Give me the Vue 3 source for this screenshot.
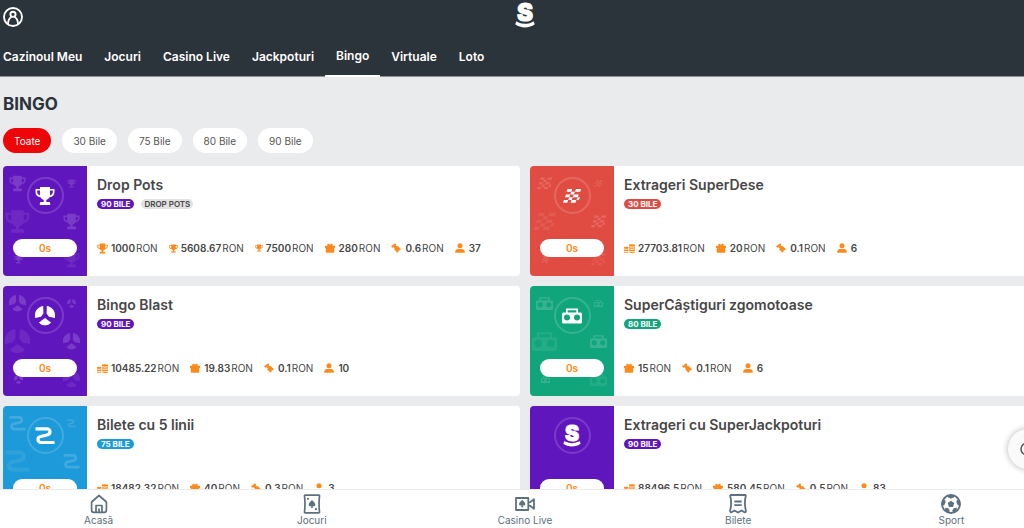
<script setup>
const menu = ['Cazinoul Meu', 'Jocuri', 'Casino Live', 'Jackpoturi', 'Bingo', 'Virtuale', 'Loto']
const filters = ['Toate', '30 Bile', '75 Bile', '80 Bile', '90 Bile']

const cup = (size, value) => ({ icon: 'trophy', size, value, unit: 'RON' })
const coins = (value) => ({ icon: 'coins', size: 'l', value, unit: 'RON' })
const gift = (value) => ({ icon: 'gift', size: 'g', value, unit: 'RON' })
const ticket = (value) => ({ icon: 'ticket', size: 'g', value, unit: 'RON' })
const players = (value) => ({ icon: 'user', size: 'g', value })

const games = [
  {
    name: 'Drop Pots', tone: 'purple', art: 'trophy', deco: true, balls: '90 BILE', tag: 'DROP POTS',
    stats: [cup('l', '1000'), cup('m', '5608.67'), cup('s', '7500'), gift('280'), ticket('0.6'), players('37')],
  },
  {
    name: 'Extrageri SuperDese', tone: 'red', art: 'flag', deco: true, balls: '30 BILE',
    stats: [coins('27703.81'), gift('20'), ticket('0.1'), players('6')],
  },
  {
    name: 'Bingo Blast', tone: 'purple', art: 'blast', deco: true, balls: '90 BILE',
    stats: [coins('10485.22'), gift('19.83'), ticket('0.1'), players('10')],
  },
  {
    name: 'SuperCâștiguri zgomotoase', tone: 'green', art: 'radio', deco: true, balls: '80 BILE',
    stats: [gift('15'), ticket('0.1'), players('6')],
  },
  {
    name: 'Bilete cu 5 linii', tone: 'blue', art: 'snake', deco: true, balls: '75 BILE',
    stats: [coins('18482.32'), gift('40'), ticket('0.3'), players('3')],
  },
  {
    name: 'Extrageri cu SuperJackpoturi', tone: 'purple', art: 'brand', deco: false, balls: '90 BILE',
    stats: [coins('88496.5'), gift('580.45'), ticket('0.5'), players('83')],
  },
]

const deco = [
  { x: 6, y: 9, s: 17, o: 0.16 },
  { x: 64, y: 13, s: 9, o: 0.14 },
  { x: 2, y: 43, s: 25, o: 0.08 },
  { x: 60, y: 47, s: 17, o: 0.16 },
  { x: 11, y: 89, s: 9, o: 0.16 },
  { x: 60, y: 85, s: 17, o: 0.08 },
]

const tabs = [
  { label: 'Acasă', icon: 'home' },
  { label: 'Jocuri', icon: 'card' },
  { label: 'Casino Live', icon: 'camera' },
  { label: 'Bilete', icon: 'receipt' },
  { label: 'Sport', icon: 'ball' },
]
</script>

<template>
  <svg class="sprite" aria-hidden="true">
    <symbol id="trophy" viewBox="0 0 20 20">
      <path d="M5 1h10v2h4.500v3c0 3-2 5-5 5.300-.800 1.400-2 2.200-3.200 2.500V16H14a1.200 1.200 0 0 1 1.200 1.200V19H4.800v-1.800A1.200 1.200 0 0 1 6 16h2.700v-2.200c-1.200-.300-2.400-1.100-3.200-2.500C2.500 11 .5 9 .5 6V3H5zM2.200 4.600V6c0 1.600.900 2.800 2.600 3.400C4.900 8 5 6.500 5 4.600zM15 4.600c0 1.900.1 3.400.2 4.800 1.700-.6 2.600-1.800 2.600-3.400V4.600z" />
    </symbol>
    <symbol id="flag" viewBox="0 0 20 20">
      <path d="M5.500 3h4.800l-1 2.700H4.500zM14 3h5.200l-1 2.700H13zM9.300 5.700H13l-1.200 2.800H8.200zM4 8.500h4.200l-1 2.700H3zM11.800 8.500h5l-1 2.700h-5zM7.200 11.200h3.600l-1.200 2.800H6.200zM15.800 11.200H18L17 14h-2.600zM2 14h4.200l-1 2.700H1zM9.600 14h4.800l-1 2.700H8.600z" />
    </symbol>
    <symbol id="blast" viewBox="0 0 20 20">
      <path d="M8.200 0 8.400 7.500 6 10.800 0 12C-1 6 2.500.8 8.200 0zM11.800 0l-.2 7.500 2.400 3.300 6 1.200C21 6 17.500.8 11.800 0zM10 12l6 4.500c-2.800 3.800-9.200 3.800-12 0z" />
    </symbol>
    <symbol id="radio" viewBox="0 0 20 20">
      <path fill-rule="evenodd" d="M4 2.500h12v4h2.500A1.500 1.500 0 0 1 20 8v8a1.500 1.500 0 0 1-1.500 1.500h-17A1.500 1.500 0 0 1 0 16V8a1.500 1.500 0 0 1 1.500-1.500H4zM5.700 4.200v2.300h8.600V4.200zM5 8.500a3 3 0 1 0 0 6 3 3 0 0 0 0-6zm10 0a3 3 0 1 0 0 6 3 3 0 0 0 0-6z" />
    </symbol>
    <symbol id="snake" viewBox="0 0 20 20">
      <path class="line" stroke-width="3.200" d="M.5 2.800H12a3 3 0 0 1 3 3c0 1.800-1 2.800-3 3.200L5.500 10.500C3.600 11 3 12 3 13.500a3 3 0 0 0 3 3h13.500" />
    </symbol>
    <symbol id="coins" viewBox="0 0 20 20">
      <path d="M9 3.500C9 2 20 2 20 3.500v2C20 7 9 7 9 5.500zM9 7.200c2 1.100 9 1.100 11 0v2.600c-2 1.100-9 1.100-11 0zM9 11.400c2 1.100 9 1.100 11 0V14c-2 1.100-9 1.100-11 0zM9 15.500c2 1.100 9 1.100 11 0v1.200c0 1.700-9 1.700-11 0zM0 8c1-1.400 7-1.400 8 0v2C6 11 2 11 0 10zM0 11.500c2 1 6 1 8 0V14c-2 1-6 1-8 0zM0 15.500c2 1 6 1 8 0v1.200c-1 1.400-7 1.400-8 0z" />
    </symbol>
    <symbol id="gift" viewBox="0 0 20 20">
      <path d="M10 5C9.500 2 8 .8 6 1.500 4.500 2 4 4 5 5.500H1.200A1.200 1.200 0 0 0 0 6.700V10h1.500v8A1.500 1.500 0 0 0 3 19.500h14a1.500 1.500 0 0 0 1.500-1.500v-8H20V6.700a1.200 1.200 0 0 0-1.200-1.200H15c1-1.500.5-3.500-1-4-2-.7-3.500.5-4 3.500z" />
    </symbol>
    <symbol id="ticket" viewBox="0 0 20 20">
      <path d="m8 .5 2.500 2.500a2 2 0 0 0 3 3L20 12.500l-2.500 2a2 2 0 0 0-2.500 2.500l-2 2.500L6.500 13A2.300 2.300 0 0 0 3 9.500L0 7z" />
    </symbol>
    <symbol id="user" viewBox="0 0 20 20">
      <circle cx="10" cy="5.500" r="5" />
      <path d="M.5 19.500V17c0-3 2.500-5 5.500-5h8c3 0 5.500 2 5.500 5v2.500z" />
    </symbol>
    <symbol id="home" viewBox="0 0 20 20">
      <path class="line" stroke-width="1.700" stroke-linejoin="round" d="M2.600 8 10 1.500 17.400 8v8.300a2 2 0 0 1-2 2H4.600a2 2 0 0 1-2-2zM7 18v-6.500h6V18M10 14.500V18" />
    </symbol>
    <symbol id="card" viewBox="0 0 20 20">
      <path class="line" stroke-width="1.700" stroke-linejoin="round" d="M3.200 1.200h13.600c.6 0 .8.400.7 1-.6 5-.6 10.600 0 15.600.1.600-.1 1-.7 1H3.200c-.6 0-.8-.4-.7-1 .6-5 .6-10.600 0-15.600-.1-.6.1-1 .7-1z" />
      <path d="M10 6c1 1.500 3.300 2.400 3.300 4.600 0 1.700-1.700 2.200-2.700 1.300l.6 1.900H8.800l.6-1.900c-1 .9-2.700.4-2.700-1.300C6.700 8.400 9 7.500 10 6z" />
      <circle cx="6" cy="4.800" r="1.100" /><circle cx="14" cy="15.200" r="1.100" />
    </symbol>
    <symbol id="camera" viewBox="0 0 20 20">
      <path class="line" stroke-width="1.800" stroke-linejoin="round" d="M1 4h12.300v12H1zM13.500 8.500l1.500-.3 4-3v9.600l-4-3-1.500-.3" />
      <path d="M7.200 5.800c1 1.400 3.100 2.200 3.100 4.200 0 1.600-1.600 2-2.500 1.200l.5 2H6.100l.5-2c-.9.800-2.500.4-2.500-1.200 0-2 2.100-2.800 3.100-4.200z" />
    </symbol>
    <symbol id="receipt" viewBox="0 0 20 20">
      <path class="line" stroke-width="1.800" stroke-linejoin="round" d="M3 1h14c.7 0 1 .4.800 1-1.200 4-1.200 9 0 14.500.2 1.300-.3 2.200-1.300 1.700L13.500 16.500 10 18.500l-3.500-2-3 1.700c-1 .5-1.500-.4-1.300-1.700 1.200-5.500 1.200-10.500 0-14.500C2 1.400 2.300 1 3 1zM6.300 7.500h7.400M6.300 11.200h7.400" />
    </symbol>
    <symbol id="ball" viewBox="0 0 20 20">
      <circle class="line" cx="10" cy="10" r="9" stroke-width="1.800" />
      <path d="m10 6.700 3.300 2.400-1.300 3.800H8L6.700 9.100zM6 1.200h8l-1 2.200-3 1-3-1zM.7 7.500 4 5.500l.6 2.800-1.400 3L.6 11.500zM19.300 7.500 16 5.500l-.6 2.800 1.400 3 2.600.2zM4 17l.3-3.200 3 .4 1.500 2.600L7.500 19zM16 17l-.3-3.200-3 .4-1.500 2.600 1.300 2.200zM2.500 5 4 2.800l.8 1.600zM17.500 5 16 2.800l-.8 1.600z" />
    </symbol>
  </svg>

  <div class="page">
    <header class="top">
      <div class="bar">
        <button class="account" aria-label="Contul meu">
          <svg viewBox="0 0 20 20" width="20" height="20">
            <g class="line" stroke-width="1.900">
              <circle cx="10" cy="10" r="9" />
              <circle cx="10" cy="7.300" r="2.600" />
              <path d="M5 17c0-3.500 1.300-5.800 3.600-7.200M15 17c0-3.500-1.300-5.800-3.600-7.200" />
            </g>
          </svg>
        </button>
        <a class="logo" href="#" aria-label="Superbet">
          <svg class="brand" viewBox="0 0 20 26" width="20" height="26">
            <text x="10" y="19" text-anchor="middle" class="mark">S</text>
            <path d="m1.500 19.300 1.500.9c4.500 2 9.500 2 14 0l1.500-.9 1.300 3c-5.500 4.200-14.100 4.200-19.600 0z" />
          </svg>
        </a>
      </div>
      <nav class="menu">
        <a v-for="m in menu" :key="m" href="#" :class="{ active: m === 'Bingo' }">{{ m }}</a>
      </nav>
    </header>

    <main class="content">
      <h1>BINGO</h1>
      <div class="filters">
        <button v-for="(f, i) in filters" :key="f" :class="{ on: i === 0 }">{{ f }}</button>
      </div>
      <section class="grid">
        <article v-for="g in games" :key="g.name" class="game" :class="g.tone">
          <div class="art">
            <svg v-if="g.deco" class="pattern" viewBox="0 0 84 110">
              <use v-for="(d, i) in deco" :key="i" :href="'#' + g.art" :x="d.x" :y="d.y" :width="d.s" :height="d.s" :opacity="d.o" />
            </svg>
            <div class="ring">
              <svg v-if="g.art === 'brand'" class="emblem brand" viewBox="0 0 20 26">
                <text x="10" y="19" text-anchor="middle" class="mark">S</text>
                <path d="m1.500 19.300 1.500.9c4.500 2 9.500 2 14 0l1.500-.9 1.300 3c-5.500 4.200-14.100 4.200-19.600 0z" />
              </svg>
              <svg v-else class="emblem"><use :href="'#' + g.art" /></svg>
            </div>
            <button class="timer">0s</button>
          </div>
          <div class="info">
            <h2>{{ g.name }}</h2>
            <div class="badges">
              <span class="balls">{{ g.balls }}</span>
              <span v-if="g.tag" class="tag">{{ g.tag }}</span>
            </div>
            <ul class="stats">
              <li v-for="(s, i) in g.stats" :key="i">
                <svg :class="['ico', s.size]"><use :href="'#' + s.icon" /></svg>
                <b>{{ s.value }}</b><span v-if="s.unit">{{ s.unit }}</span>
              </li>
            </ul>
          </div>
        </article>
      </section>
    </main>

    <nav class="tabs">
      <a v-for="t in tabs" :key="t.label" href="#">
        <svg width="20" height="20"><use :href="'#' + t.icon" /></svg>
        <span>{{ t.label }}</span>
      </a>
    </nav>
  </div>

  <button class="float" aria-label="Caută">
    <svg viewBox="0 0 16 16" width="16" height="16"><g class="line" stroke-width="1.500"><circle cx="7" cy="8" r="6" /><path d="m12 12 3 3" /></g></svg>
  </button>
</template>

<style>
html, body {
  overflow: hidden;
  background: #e9ebed;
}
</style>

<style scoped>
* {
  box-sizing: border-box;
}
.sprite {
  position: absolute;
  width: 0;
  height: 0;
}
.mark {
  font: 900 24px Inter, sans-serif;
  stroke: currentColor;
  stroke-width: 1;
}
svg {
  display: block;
  fill: currentColor;
}
.line {
  fill: none;
  stroke: currentColor;
}
.brand {
  overflow: visible;
}
button {
  border: 0;
  padding: 0;
  font: inherit;
  cursor: pointer;
}
a {
  color: inherit;
  text-decoration: none;
}
.page {
  display: flex;
  flex-direction: column;
  width: calc(100% + 26px);
  height: 100vh;
  font-family: Inter, "Liberation Sans", sans-serif;
  color: #474747;
}
.top {
  flex: none;
  background: #2b333b;
  color: #fff;
  border-bottom: 1px solid #8d9299;
}
.bar {
  display: grid;
  grid-template-columns: 1fr auto 1fr;
  align-items: center;
  height: 34px;
  padding: 0 3px;
}
.account {
  justify-self: start;
  background: none;
  color: #fff;
}
.logo {
  align-self: start;
  padding-top: 2px;
}
.menu {
  display: flex;
  height: 42px;
  font-size: 12px;
  font-weight: 600;
  line-height: 46px;
}
.menu a {
  padding: 0 11px;
}
.menu a:first-child {
  padding-left: 3px;
}
.menu .active {
  height: 43px;
  line-height: 44px;
  border-bottom: 2px solid #fff;
}
.content {
  flex: 1;
  min-height: 0;
  overflow: hidden;
  padding: 16px 3px 0;
}
h1 {
  margin: 0;
  font-size: 17px;
  line-height: 22px;
  font-weight: 700;
  color: #2b333b;
}
.filters {
  display: flex;
  gap: 11px;
  margin-top: 13px;
}
.filters button {
  height: 25px;
  padding: 0 11px;
  border-radius: 13px;
  background: #fff;
  color: #555;
  font-size: 10px;
}
.filters .on {
  background: #ee0509;
  color: #fff;
}
.grid {
  display: grid;
  grid-template-columns: 1fr 1fr;
  gap: 10px;
  margin-top: 13px;
}
.game {
  display: flex;
  height: 110px;
  border-radius: 4px;
  overflow: hidden;
  background: #fff;
}
.purple { --tone: #6016bd; }
.red { --tone: #e04c42; }
.green { --tone: #10a57b; }
.blue { --tone: #1d9ad9; }
.art {
  position: relative;
  flex: none;
  display: flex;
  flex-direction: column;
  align-items: center;
  width: 84px;
  padding: 11px 10px 0;
  background: var(--tone);
  color: #fff;
}
.pattern {
  position: absolute;
  inset: 0;
  width: 84px;
  height: 110px;
}
.ring {
  display: flex;
  align-items: center;
  justify-content: center;
  width: 37px;
  height: 37px;
  border: 2px solid rgba(255, 255, 255, 0.16);
  border-radius: 50%;
}
.emblem {
  width: 20px;
  height: 20px;
}
.emblem.brand {
  width: 18px;
  height: 23px;
}
.timer {
  position: relative;
  align-self: stretch;
  height: 18px;
  margin-top: 25px;
  border-radius: 9px;
  background: #fff;
  color: #ff8a1c;
  font-size: 10px;
  font-weight: 600;
}
.info {
  flex: 1;
  min-width: 0;
  padding: 10px 10px 0;
}
h2 {
  margin: 0;
  font-size: 14px;
  line-height: 18px;
  font-weight: 600;
}
.badges {
  display: flex;
  gap: 7px;
  margin-top: 5px;
  font-size: 8px;
  line-height: 10px;
  font-weight: 700;
}
.badges span {
  padding: 0 4px;
  border-radius: 5px;
}
.balls {
  background: var(--tone);
  color: #fff;
}
.badges .tag {
  padding: 0 3px;
  background: #e2e2e2;
  font-weight: 600;
}
.stats {
  display: flex;
  gap: 11px;
  margin: 32px 0 0;
  padding: 0;
  list-style: none;
  font-size: 10px;
  line-height: 14px;
}
.stats li {
  display: flex;
  align-items: center;
}
.stats b {
  font-weight: 600;
}
.stats span {
  margin-left: 1px;
}
.ico {
  color: #ff8a1c;
  width: 10px;
  height: 10px;
  margin-right: 4px;
}
.ico.l {
  width: 11px;
  height: 11px;
  margin-right: 3px;
}
.ico.m {
  width: 9px;
  height: 9px;
  margin-right: 3px;
}
.ico.s {
  width: 8px;
  height: 8px;
  margin-right: 3px;
}
.tabs {
  flex: none;
  display: flex;
  height: 39px;
  margin: 0 -8px;
  border-top: 1px solid #e9ebed;
  background: #fff;
  color: #5d7080;
  font-size: 10px;
  line-height: 12px;
}
.tabs a {
  flex: 1;
  display: flex;
  flex-direction: column;
  align-items: center;
  padding-top: 4px;
}
.float {
  position: fixed;
  right: -24px;
  top: 429px;
  display: flex;
  align-items: center;
  width: 40px;
  height: 40px;
  padding-left: 12px;
  border-radius: 50%;
  background: #fafafa;
  color: #555;
  box-shadow: 0 0 6px rgba(0, 0, 0, 0.3);
}
</style>
